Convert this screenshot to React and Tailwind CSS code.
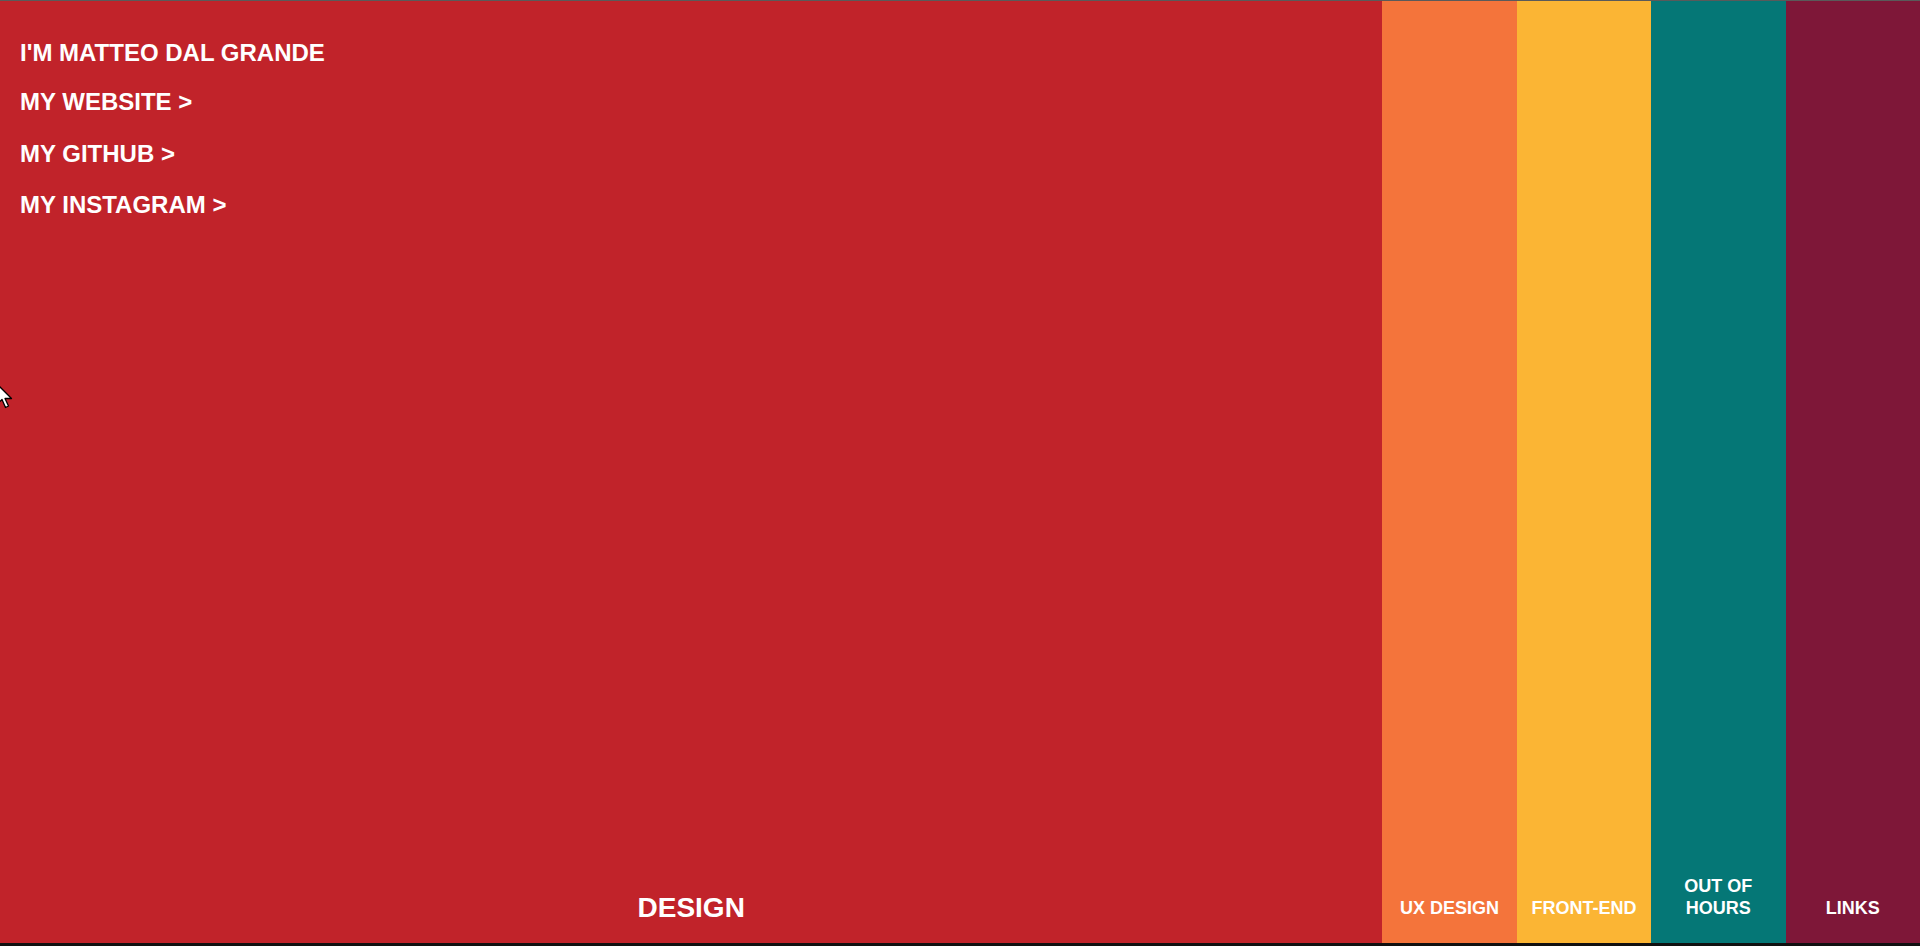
import React from "react";

const font = { fontFamily: '"Liberation Sans", Arial, sans-serif' };

function SideCol({ bg, children }) {
  return (
    <div className={`flex w-[7%] flex-col items-center justify-end pb-[24px] ${bg}`}>
      <div className="text-center text-[18px] font-bold leading-[22px] text-white">{children}</div>
    </div>
  );
}

export default function App() {
  return (
    <div
      style={font}
      className="relative flex h-[946px] w-full overflow-hidden border-t border-b-[3px] border-t-[#5a5a5a] border-b-[#111]"
    >
      <div className="flex w-[72%] flex-col justify-between bg-[#c1232a] pb-[19px] pl-[20px] pt-[38px]">
        <div className="flex flex-col text-[24px] font-bold uppercase leading-[28px] text-white">
          <div>I'M MATTEO DAL GRANDE</div>
          <a className="mt-[21px]">MY WEBSITE &gt;</a>
          <a className="mt-[24px]">MY GITHUB &gt;</a>
          <a className="mt-[23px]">MY INSTAGRAM &gt;</a>
        </div>
        <div className="-ml-[20px] text-center text-[28px] font-bold leading-[32px] text-white">DESIGN</div>
      </div>
      <SideCol bg="bg-[#f4743b]">UX DESIGN</SideCol>
      <SideCol bg="bg-[#fbb534]">FRONT-END</SideCol>
      <SideCol bg="bg-[#057776]">
        OUT OF
        <br />
        HOURS
      </SideCol>
      <SideCol bg="bg-[#7e1738]">LINKS</SideCol>

      <svg
        className="absolute left-[-4px] top-[382px]"
        width="20"
        height="28"
        viewBox="0 0 20 28"
      >
        <path
          d="M1 1 L1 21 L6 16.5 L9.5 24.5 L12.5 23 L9 15.5 L15.5 15.5 Z"
          fill="#fff"
          stroke="#000"
          strokeWidth="1.3"
          strokeLinejoin="round"
        />
      </svg>
    </div>
  );
}
